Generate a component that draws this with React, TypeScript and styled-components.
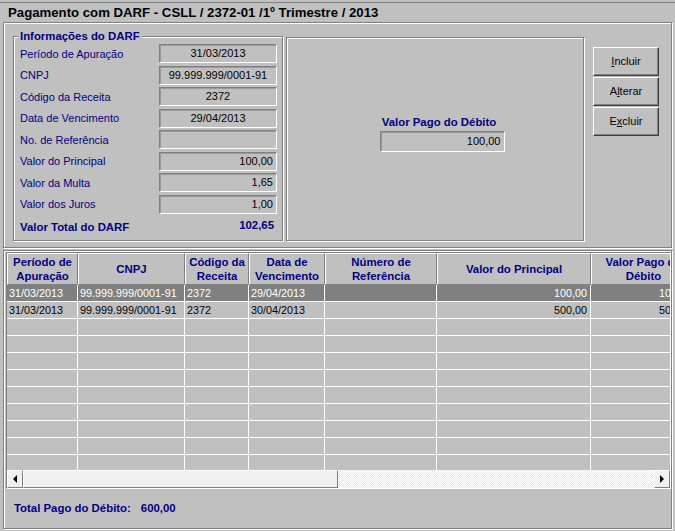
import React from "react";
import styled, { createGlobalStyle } from "styled-components";

const GlobalStyle = createGlobalStyle`
    html, body {
        margin: 0;
        padding: 0;
        background: #c0c0c0;
    }

    body {
        font-family: "Liberation Sans", Arial, sans-serif;
        font-size: 11px;
        color: #000;
    }
`;

type Align = "left" | "center" | "right";

const fields: { label: string; value: string; align: Align }[] = [
    { label: "Período de Apuração", value: "31/03/2013",         align: "center" },
    { label: "CNPJ",                value: "99.999.999/0001-91", align: "center" },
    { label: "Código da Receita",   value: "2372",               align: "center" },
    { label: "Data de Vencimento",  value: "29/04/2013",         align: "center" },
    { label: "No. de Referência",   value: "",                   align: "center" },
    { label: "Valor do Principal",  value: "100,00",             align: "right" },
    { label: "Valor da Multa",      value: "1,65",               align: "right" },
    { label: "Valor dos Juros",     value: "1,00",               align: "right" },
];

const columns: { title: string[]; width: number; align: Align }[] = [
    { title: ["Período de", "Apuração"],    width: 71,  align: "left" },
    { title: ["CNPJ"],                      width: 107, align: "left" },
    { title: ["Código da", "Receita"],      width: 64,  align: "left" },
    { title: ["Data de", "Vencimento"],     width: 76,  align: "left" },
    { title: ["Número de", "Referência"],   width: 112, align: "left" },
    { title: ["Valor do Principal"],        width: 154, align: "right" },
    { title: ["Valor Pago do", "Débito"],   width: 105, align: "right" },
];

const rows: string[][] = [
    ["31/03/2013", "99.999.999/0001-91", "2372", "29/04/2013", "", "100,00", "100,00"],
    ["31/03/2013", "99.999.999/0001-91", "2372", "30/04/2013", "", "500,00", "500,00"],
    ...Array.from({ length: 9 }, () => ["", "", "", "", "", "", ""]),
];

const App = () => {
    return (
        <>
            <GlobalStyle />
            <Window>
                <TitleBar>Pagamento com DARF - CSLL / 2372-01 /1º Trimestre / 2013</TitleBar>

                <TopPanel>
                    <GroupBox>
                        <Legend>Informações do DARF</Legend>
                        {fields.map(f => (
                            <FieldRow key={f.label}>
                                <Label>{f.label}</Label>
                                <Field $align={f.align}>{f.value}</Field>
                            </FieldRow>
                        ))}
                        <TotalRow>
                            <span>Valor Total do DARF</span>
                            <TotalValue>102,65</TotalValue>
                        </TotalRow>
                    </GroupBox>

                    <CenterPanel>
                        <CenterLabel>Valor Pago do Débito</CenterLabel>
                        <WideField>100,00</WideField>
                    </CenterPanel>

                    <ButtonColumn>
                        <Button><u>I</u>ncluir</Button>
                        <Button>A<u>l</u>terar</Button>
                        <Button>E<u>x</u>cluir</Button>
                    </ButtonColumn>
                </TopPanel>

                <BottomPanel>
                    <GridFrame>
                        <GridViewport>
                            <Table>
                                <colgroup>
                                    {columns.map((c, i) => <col key={i} width={c.width} />)}
                                </colgroup>
                                <thead>
                                    <tr>
                                        {columns.map((c, i) => (
                                            <HeadCell key={i}>
                                                {c.title.map((t, j) => <div key={j}>{t}</div>)}
                                            </HeadCell>
                                        ))}
                                    </tr>
                                </thead>
                                <tbody>
                                    {rows.map((r, i) => (
                                        <tr key={i}>
                                            {r.map((v, j) => (
                                                <Cell key={j} $align={columns[j].align} $selected={i === 0}>
                                                    {v || "\u00a0"}
                                                </Cell>
                                            ))}
                                        </tr>
                                    ))}
                                </tbody>
                            </Table>
                        </GridViewport>
                        <HScroll>
                            <ScrollButton><Arrow $dir="left" /></ScrollButton>
                            <ScrollThumb />
                            <ScrollTrack />
                            <ScrollButton><Arrow $dir="right" /></ScrollButton>
                        </HScroll>
                    </GridFrame>
                    <Footer>
                        <span>Total Pago do Débito:</span>
                        <FooterValue>600,00</FooterValue>
                    </Footer>
                </BottomPanel>
            </Window>
        </>
    );
};

const Window = styled.div`
    width: 675px;
    height: 531px;
    background: #c0c0c0;
    overflow: hidden;
`;

const TitleBar = styled.div`
    margin-top: 2px;
    border-top: 1px solid #808080;
    height: 19px;
    line-height: 19px;
    padding-left: 8px;
    font-size: 13.2px;
    font-weight: bold;
    color: #000;
    white-space: nowrap;
`;

const Panel = styled.div`
    margin: 0 3px 0 3px;
    box-sizing: border-box;
    border: 1px solid #808080;
    box-shadow: inset 1px 1px 0 #fff, 1px 1px 0 #fff;
`;

const TopPanel = styled(Panel)`
    height: 226px;
    display: flex;
    align-items: flex-start;
`;

const GroupBox = styled.div`
    position: relative;
    margin: 13px 0 0 9px;
    width: 270px;
    height: 205px;
    box-sizing: border-box;
    padding-top: 7px;
    border: 1px solid #808080;
    box-shadow: inset 1px 1px 0 #fff, 1px 1px 0 #fff;
`;

const Legend = styled.span`
    position: absolute;
    top: -8px;
    left: 4px;
    padding: 0 2px;
    line-height: 14px;
    background: #c0c0c0;
    font-size: 11.4px;
    font-weight: bold;
    color: #000080;
`;

const FieldRow = styled.div`
    display: flex;
    align-items: center;
    height: 19px;
    margin-bottom: 2.5px;
`;

const Label = styled.span`
    flex: 1;
    padding-left: 6px;
    color: #000080;
    white-space: nowrap;
`;

const Field = styled.div<{ $align: Align }>`
    width: 118px;
    height: 19px;
    margin-right: 5px;
    box-sizing: border-box;
    padding: 0 3px;
    line-height: 16px;
    text-align: ${p => p.$align};
    border: 1px solid;
    border-color: #808080 #fff #fff #808080;
    box-shadow: inset 1px 1px 0 #9a9a9a;
    white-space: nowrap;
`;

const TotalRow = styled.div`
    display: flex;
    justify-content: space-between;
    align-items: center;
    height: 16px;
    margin-top: 5px;
    padding: 0 8px 0 6px;
    font-size: 11.4px;
    font-weight: bold;
    color: #000080;
`;

const TotalValue = styled.span`
    margin-top: -3px;
`;

const CenterPanel = styled.div`
    margin: 14px 0 0 3px;
    width: 298px;
    height: 204px;
    box-sizing: border-box;
    padding: 76px 0 0 14px;
    display: flex;
    flex-direction: column;
    align-items: center;
    border: 1px solid #808080;
    box-shadow: inset 1px 1px 0 #fff, 1px 1px 0 #fff;
`;

const CenterLabel = styled.div`
    line-height: 16px;
    font-size: 11.4px;
    font-weight: bold;
    color: #000080;
    margin-left: -6px;
`;

const WideField = styled.div`
    margin-top: 1px;
    width: 125px;
    height: 21px;
    box-sizing: border-box;
    padding: 0 3px;
    line-height: 18px;
    text-align: right;
    border: 1px solid;
    border-color: #808080 #fff #fff #808080;
    box-shadow: inset 1px 1px 0 #9a9a9a;
`;

const ButtonColumn = styled.div`
    margin: 24px 0 0 9px;
    display: flex;
    flex-direction: column;
    gap: 1px;
`;

const Button = styled.div`
    width: 66px;
    height: 29px;
    box-sizing: border-box;
    display: flex;
    align-items: center;
    justify-content: center;
    color: #000;
    border: 1px solid;
    border-color: #fff #404040 #404040 #fff;
    box-shadow: inset -1px -1px 0 #808080;
    padding-bottom: 2px;
    cursor: default;
`;

const BottomPanel = styled(Panel)`
    margin-top: 2px;
    height: 279px;
    display: flex;
    flex-direction: column;
`;

const GridFrame = styled.div`
    margin: 1px 0 0 2px;
    border: 1px solid;
    border-color: #808080 #fff #fff #808080;
    overflow: hidden;
`;

const GridViewport = styled.div`
    height: 217px;
    overflow: hidden;
`;

const Table = styled.table`
    border-collapse: separate;
    border-spacing: 0;
    table-layout: fixed;
    width: 689px;
`;

const HeadCell = styled.th`
    padding: 0 0 1px;
    height: 29px;
    font-size: 11.4px;
    font-weight: bold;
    color: #000080;
    text-align: center;
    vertical-align: middle;
    line-height: 14px;
    white-space: nowrap;
    overflow: hidden;
    background: #c0c0c0;
    border-top: 1px solid #fff;
    border-left: 1px solid #fff;
    border-right: 1px solid #808080;
    border-bottom: 1px solid #808080;
`;

const Cell = styled.td<{ $align: Align; $selected: boolean }>`
    padding: 0 3px 0 2px;
    font-size: 10.8px;
    line-height: 16px;
    text-align: ${p => p.$align};
    white-space: nowrap;
    overflow: hidden;
    background: ${p => (p.$selected ? "#808080" : "#c0c0c0")};
    color: ${p => (p.$selected ? "#fff" : "#000")};
    border-right: 1px solid #fff;
    border-bottom: 1px solid #fff;
`;

const HScroll = styled.div`
    display: flex;
    height: 18px;
    background: repeating-conic-gradient(#fff 0 25%, #ebebeb 0 50%) 0 0 / 2px 2px;
`;

const ScrollButton = styled.div`
    width: 16px;
    height: 18px;
    box-sizing: border-box;
    display: flex;
    align-items: center;
    justify-content: center;
    background: #f0f0f0;
    border: 1px solid;
    border-color: #fff #808080 #808080 #fff;
`;

const ScrollThumb = styled.div`
    width: 315px;
    box-sizing: border-box;
    background: #f0f0f0;
    border: 1px solid;
    border-color: #fff #808080 #808080 #fff;
`;

const ScrollTrack = styled.div`
    flex: 1;
`;

const Arrow = styled.span<{ $dir: "left" | "right" }>`
    width: 0;
    height: 0;
    border-top: 4px solid transparent;
    border-bottom: 4px solid transparent;
    ${p => (p.$dir === "left" ? "border-right: 4px solid #000;" : "border-left: 4px solid #000;")}
`;

const Footer = styled.div`
    flex: 1;
    display: flex;
    align-items: center;
    padding: 0 0 2px 10px;
    font-size: 11.4px;
    font-weight: bold;
    color: #000080;
`;

const FooterValue = styled.span`
    margin-left: 10px;
`;

export default App;
